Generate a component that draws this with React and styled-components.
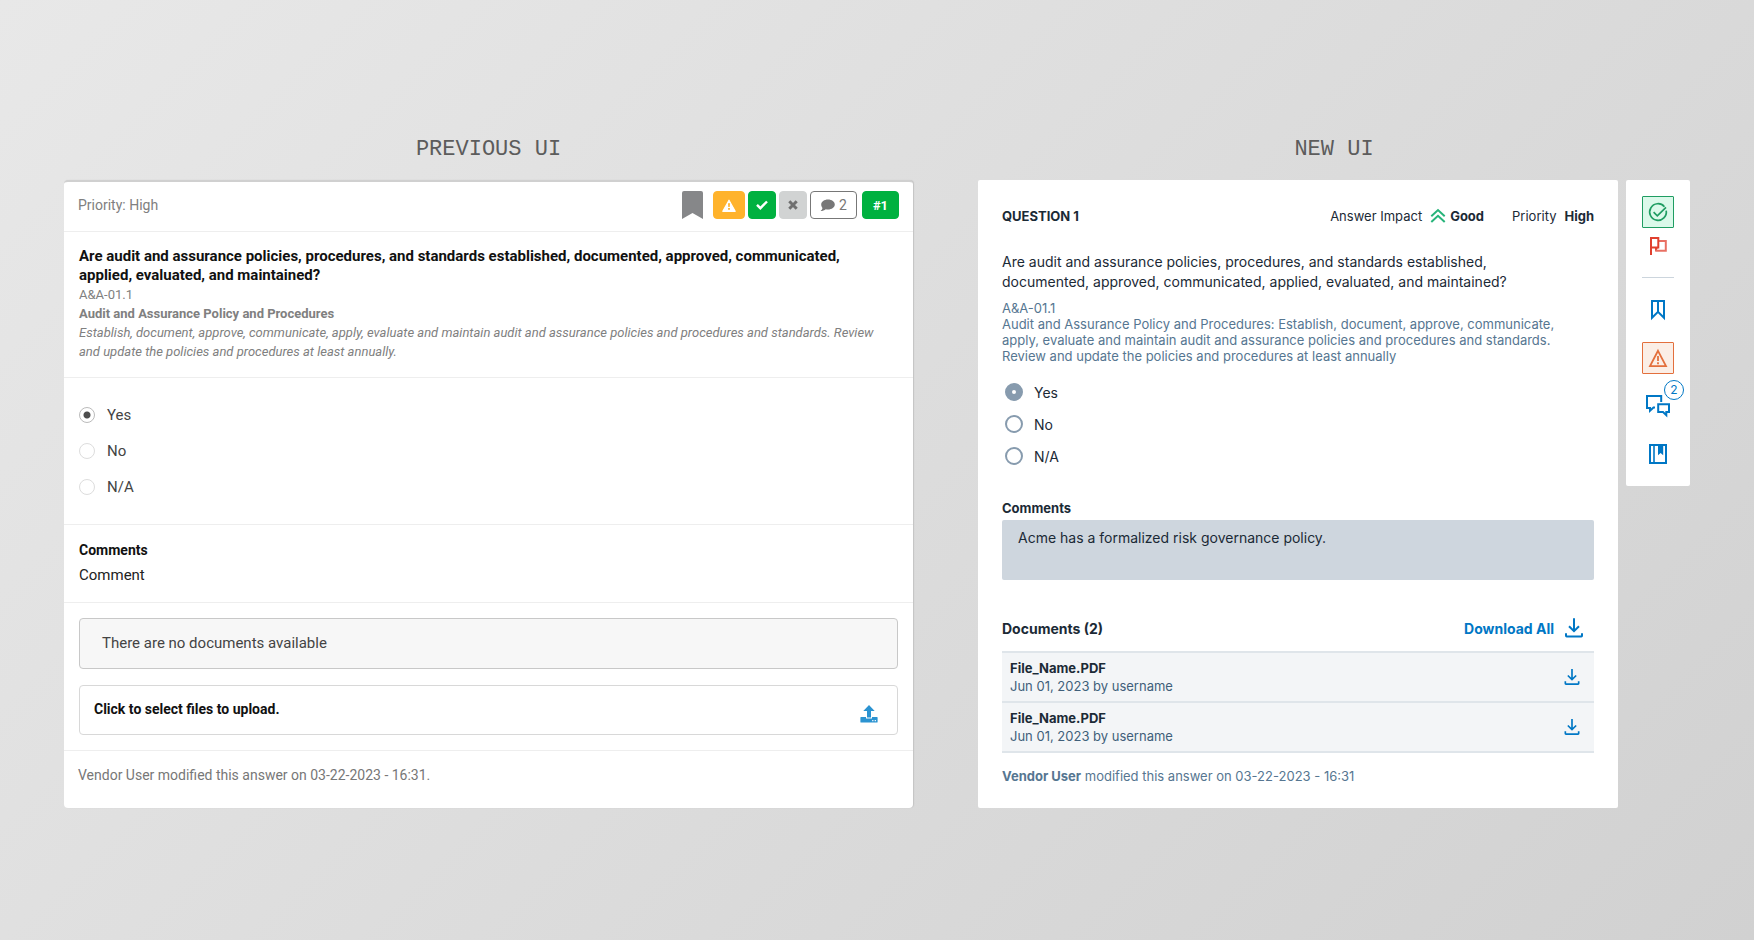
import React, { useState } from 'react';
import styled, { createGlobalStyle } from 'styled-components';

const GlobalStyle = createGlobalStyle`
    * {
        box-sizing: border-box;
    }
    body {
        margin: 0;
    }
    h1, h2, h3, p, ul, fieldset {
        margin: 0;
        padding: 0;
    }
    button {
        font: inherit;
        cursor: pointer;
    }
`

const Page = styled.main`
    min-height: 100vh;
    padding: 138px 64px 64px;
    display: grid;
    grid-template-columns: 849fr 712fr;
    gap: 65px;
    align-items: start;
    background: linear-gradient(135deg, #e8e8e8, #d1d1d1);
`
const Column = styled.section`
    display: flex;
    flex-direction: column;
    gap: 18px;
    min-width: 0;
`
const ColumnTitle = styled.h1`
    font-family: "Liberation Mono", monospace;
    font-size: 22px;
    line-height: 24px;
    font-weight: 400;
    text-align: center;
    color: #5c5c5c;
`

/* ---------- previous card ---------- */

const OldCard = styled.article`
    font-family: Roboto, sans-serif;
    background-color: #fff;
    border-top: 2px solid #d0d0d0;
    border-radius: 4px;
    box-shadow: 1px 0 1px #c4c4c4;
    color: #222;
`
const OldHeader = styled.header`
    display: flex;
    align-items: center;
    justify-content: space-between;
    padding: 9px 14px 12px;
    border-bottom: 1px solid #eee;
    font-size: 14px;
    color: #808080;
`
const Badges = styled.div`
    display: flex;
    align-items: center;
    gap: 3px;
`
const Badge = styled.button`
    display: flex;
    align-items: center;
    justify-content: center;
    gap: 4px;
    height: 28px;
    width: ${props => props.$width}px;
    margin-left: ${props => props.$space || 0}px;
    padding: 0;
    border: 1px solid ${props => props.$line || props.$fill};
    border-radius: 4px;
    background-color: ${props => props.$fill};
    color: ${props => props.$color || '#fff'};
    font-size: ${props => props.$bold ? 13 : 14}px;
    font-weight: ${props => props.$bold ? 700 : 400};
`
const BookmarkToggle = styled.button`
    display: flex;
    padding: 0;
    border: 0;
    background: none;
`
const OldSection = styled.div`
    padding: ${props => props.$pad};
    border-bottom: 1px solid #eee;
`
const OldQuestion = styled.h2`
    font-size: 15px;
    line-height: 19px;
    font-weight: 700;
    color: #111;
`
const OldMeta = styled.p`
    font-size: 13px;
    line-height: 19px;
    color: #808080;
    font-weight: ${props => props.$bold ? 700 : 400};
    font-style: ${props => props.$italic ? 'italic' : 'normal'};
`
const OldOptions = styled.fieldset`
    border: 0;
    display: flex;
    flex-direction: column;
`
const OldOption = styled.label`
    display: flex;
    align-items: center;
    gap: 12px;
    height: 36px;
    font-size: 15px;
    color: #444;
`
const OldRadio = styled.input`
    appearance: none;
    width: 16px;
    height: 16px;
    margin: 0;
    border: 1px solid #ddd;
    border-radius: 50%;
    background-color: #fff;
    &:checked {
        border-color: #bbb;
        background-image: radial-gradient(circle, #4d4d4d 3px, transparent 4px);
    }
`
const OldLabel = styled.h3`
    font-size: 14px;
    line-height: 25px;
    font-weight: 700;
    color: #111;
`
const OldComment = styled.p`
    font-size: 15px;
    line-height: 25px;
`
const OldFiles = styled(OldSection)`
    display: flex;
    flex-direction: column;
    gap: 16px;
`
const EmptyBox = styled.p`
    padding: 12px 22px 13px;
    border: 1px solid #c8c8c8;
    border-radius: 4px;
    background-color: #f7f7f7;
    font-size: 15px;
    line-height: 24px;
    color: #444;
`
const UploadButton = styled.button`
    display: flex;
    align-items: flex-start;
    justify-content: space-between;
    height: 50px;
    padding: 13px 19px 0 14px;
    border: 1px solid #d8d8d8;
    border-radius: 4px;
    background-color: #fff;
    color: #111;
    font-size: 14px;
    line-height: 20px;
    font-weight: 700;

    svg {
        margin-top: 6px;
    }
`
const OldFooter = styled.footer`
    padding: 14px 14px 23px;
    font-size: 14px;
    line-height: 20px;
    color: #777;
`

/* ---------- new card ---------- */

const NewLayout = styled.div`
    display: flex;
    align-items: flex-start;
    gap: 8px;
    font-family: Inter, sans-serif;
    color: #1b2a36;
`
const NewCard = styled.article`
    flex: 1;
    min-width: 0;
    padding: 24px 24px 22px;
    border-radius: 2px;
    background-color: #fff;
`
const NewHeader = styled.header`
    display: flex;
    align-items: center;
    justify-content: space-between;
    height: 24px;
    margin-bottom: 24px;
    font-size: 13px;
`
const QuestionNumber = styled.h3`
    font-size: 13px;
    font-weight: 700;
`
const Facts = styled.div`
    display: flex;
    gap: 28px;
`
const Fact = styled.div`
    display: flex;
    align-items: center;
    gap: 8px;
`
const FactValue = styled.strong`
    display: flex;
    align-items: center;
    gap: 4px;
    font-weight: 700;
`
const NewQuestion = styled.h2`
    max-width: 540px;
    font-size: 14px;
    line-height: 20px;
    font-weight: 400;
`
const NewMeta = styled.p`
    margin-top: 8px;
    font-size: 13px;
    line-height: 16px;
    color: #567691;
`
const NewOptions = styled.fieldset`
    border: 0;
    margin: 12px 0 28px;
`
const NewOption = styled.label`
    display: flex;
    align-items: center;
    gap: 11px;
    height: 32px;
    padding-left: 3px;
    font-size: 14px;
`
const NewRadio = styled.input`
    appearance: none;
    width: 18px;
    height: 18px;
    margin: 0;
    border: 2px solid #879bae;
    border-radius: 50%;
    background-color: #fff;
    &:checked {
        border-width: 7px;
    }
`
const FieldLabel = styled.label`
    display: block;
    margin-bottom: 4px;
    font-size: 13px;
    line-height: 16px;
    font-weight: 700;
`
const CommentBox = styled.textarea`
    display: block;
    width: 100%;
    height: 60px;
    padding: 8px 16px;
    border: 0;
    border-radius: 2px;
    background-color: #ced6de;
    resize: none;
    font-family: inherit;
    font-size: 14px;
    line-height: 20px;
    color: #1b2a36;
`
const DocumentsHeader = styled.div`
    display: flex;
    align-items: center;
    justify-content: space-between;
    height: 32px;
    margin: 32px 0 7px;
    font-size: 14px;
`
const DocumentsTitle = styled.h3`
    font-size: 14px;
    font-weight: 700;
`
const LinkButton = styled.button`
    display: flex;
    align-items: center;
    gap: 8px;
    padding: 0 ${props => props.$right || 0}px 0 0;
    border: 0;
    background: none;
    color: #0077c5;
    font-weight: 700;
`
const FileList = styled.ul`
    list-style: none;
    border-top: 2px solid #dfe5ea;
`
const FileRow = styled.li`
    display: flex;
    align-items: center;
    justify-content: space-between;
    padding: 6px 12px 6px 8px;
    border-bottom: 2px solid #dfe5ea;
    background-color: #f3f5f7;
    font-size: 13px;
    line-height: 18px;
`
const FileName = styled.p`
    font-weight: 700;
`
const FileInfo = styled.p`
    color: #3f5f7a;
`
const NewFooter = styled.footer`
    margin-top: 13px;
    font-size: 13px;
    line-height: 20px;
    color: #567691;
`

/* ---------- side toolbar ---------- */

const Toolbar = styled.nav`
    width: 64px;
    padding: 16px;
    display: flex;
    flex-direction: column;
    gap: 16px;
    border-radius: 2px;
    background-color: #fff;
`
const ToolGroup = styled.div`
    display: flex;
    flex-direction: column;
    gap: 2px;
    padding-bottom: 15px;
    border-bottom: 1px solid #ccd5dd;
`
const Tool = styled.button`
    position: relative;
    display: flex;
    align-items: center;
    justify-content: center;
    width: 32px;
    height: 32px;
    padding: 0;
    border: 1px solid ${props => props.$tint ? props.$color : 'transparent'};
    border-radius: 1px;
    background-color: ${props => props.$tint || 'transparent'};
    color: ${props => props.$color || '#0077c5'};
`
const Count = styled.span`
    position: absolute;
    top: -11px;
    right: -11px;
    width: 20px;
    height: 20px;
    border: 1px solid #0077c5;
    border-radius: 50%;
    background-color: #fff;
    font-size: 12px;
    line-height: 18px;
    text-align: center;
`

const LineIcon = ({ size = 24, width = 2, children }) => (
    <svg width={size} height={size} viewBox="0 0 24 24" fill="none" stroke="currentColor" strokeWidth={width} aria-hidden="true">
        {children}
    </svg>
)

const DownloadIcon = ({ size }) => (
    <LineIcon size={size}>
        <path d="M12 2.3v12.4M7 10.2l5 5 5-5" />
        <path d="M4 17.2v2.6q0 .7.7.7h14.6q.7 0 .7-.7v-2.6" />
    </LineIcon>
)

const answers = ['Yes', 'No', 'N/A'];

const files = [
    { id: 1, name: 'File_Name.PDF', info: 'Jun 01, 2023 by username' },
    { id: 2, name: 'File_Name.PDF', info: 'Jun 01, 2023 by username' },
];

const PreviousCard = () => {
    const [answer, setAnswer] = useState('Yes');
    return (
        <OldCard>
            <OldHeader>
                <span>Priority: High</span>
                <Badges>
                    <BookmarkToggle aria-label="Bookmark">
                        <svg width="21" height="28" viewBox="0 0 21 28" fill="#868789"><path d="M0 2q0-2 2-2h17q2 0 2 2v26L10.5 22 0 28z" /></svg>
                    </BookmarkToggle>
                    <Badge $width={32} $space={7} $fill="#ffb32c" aria-label="Warning">
                        <svg width="14" height="13" viewBox="0 0 14 13">
                            <path d="M7 1.2 13.2 12.3H.8z" fill="#fff" stroke="#fff" strokeWidth="1.2" strokeLinejoin="round" />
                            <path d="M6 4.3h2l-.3 3.8H6.3zM6.1 9h1.8v1.7H6.1z" fill="#ffb32c" />
                        </svg>
                    </Badge>
                    <Badge $width={28} $fill="#00b140" aria-label="Accept">
                        <svg width="12" height="10" viewBox="0 0 12 10" fill="none" stroke="#fff" strokeWidth="2.4"><path d="M1 4.8 4.4 8.2 11 1.5" /></svg>
                    </Badge>
                    <Badge $width={28} $fill="#d1d3d3" $color="#6f6f6f" aria-label="Reject">
                        <svg width="10" height="10" viewBox="0 0 10 10" fill="none" stroke="currentColor" strokeWidth="3"><path d="M1.3 1.3 8.7 8.7M8.7 1.3 1.3 8.7" /></svg>
                    </Badge>
                    <Badge $width={47} $fill="#fff" $line="#777" $color="#777">
                        <svg width="15" height="13" viewBox="0 0 15 13" fill="currentColor"><path d="M8 .5c3.8 0 6.8 2.2 6.8 5S11.8 10.500 8 10.500c-.8 0-1.500-.1-2.200-.3C4.4 11.3 2.6 12 .6 12c1-.8 1.7-1.8 1.9-3C1.7 8 1.2 6.8 1.2 5.5c0-2.8 3-5 6.800-5z" /></svg>
                        2
                    </Badge>
                    <Badge $width={37} $space={2} $fill="#00b140" $bold>#1</Badge>
                </Badges>
            </OldHeader>

            <OldSection $pad="15px 30px 16px 15px">
                <OldQuestion>Are audit and assurance policies, procedures, and standards established, documented, approved, communicated, applied, evaluated, and maintained?</OldQuestion>
                <OldMeta>A&amp;A-01.1</OldMeta>
                <OldMeta $bold>Audit and Assurance Policy and Procedures</OldMeta>
                <OldMeta $italic>Establish, document, approve, communicate, apply, evaluate and maintain audit and assurance policies and procedures and standards. Review and update the policies and procedures at least annually.</OldMeta>
            </OldSection>

            <OldSection $pad="19px 15px">
                <OldOptions>
                    {answers.map(item => (
                        <OldOption key={item}>
                            <OldRadio type="radio" name="previous-answer" checked={answer === item} onChange={() => setAnswer(item)} />
                            {item}
                        </OldOption>
                    ))}
                </OldOptions>
            </OldSection>

            <OldSection $pad="13px 15px 14px">
                <OldLabel>Comments</OldLabel>
                <OldComment>Comment</OldComment>
            </OldSection>

            <OldFiles $pad="15px">
                <EmptyBox>There are no documents available</EmptyBox>
                <UploadButton>
                    Click to select files to upload.
                    <svg width="18" height="18" viewBox="0 0 18 18" fill="#2b93d1">
                        <path d="M9 0 14.7 6H11v6.5H7V6H3.3z" />
                        <path d="M1 12h5v1.5h6V12h5q.6 0 .6.6V17q0 .6-.6.6H1q-.6 0-.6-.6v-4.4q0-.6.6-.6z" />
                        <path d="M12.2 15h1.2v1.2h-1.2zM14.7 15h1.2v1.2h-1.2z" fill="#fff" />
                    </svg>
                </UploadButton>
            </OldFiles>

            <OldFooter>Vendor User modified this answer on 03-22-2023 - 16:31.</OldFooter>
        </OldCard>
    )
}

const NewCardView = () => {
    const [answer, setAnswer] = useState('Yes');
    return (
        <NewCard>
            <NewHeader>
                <QuestionNumber>QUESTION 1</QuestionNumber>
                <Facts>
                    <Fact>
                        Answer Impact
                        <FactValue>
                            <svg width="16" height="16" viewBox="0 0 16 16" fill="none" stroke="#27b47a" strokeWidth="2"><path d="M1.3 8.2 8 2l6.7 6.2M1.3 14 8 7.8l6.7 6.2" /></svg>
                            Good
                        </FactValue>
                    </Fact>
                    <Fact>Priority <FactValue>High</FactValue></Fact>
                </Facts>
            </NewHeader>

            <NewQuestion>Are audit and assurance policies, procedures, and standards established, documented, approved, communicated, applied, evaluated, and maintained?</NewQuestion>
            <NewMeta>
                A&amp;A-01.1<br />
                Audit and Assurance Policy and Procedures: Establish, document, approve, communicate, apply, evaluate and maintain audit and assurance policies and procedures and standards. Review and update the policies and procedures at least annually
            </NewMeta>

            <NewOptions>
                {answers.map(item => (
                    <NewOption key={item}>
                        <NewRadio type="radio" name="new-answer" checked={answer === item} onChange={() => setAnswer(item)} />
                        {item}
                    </NewOption>
                ))}
            </NewOptions>

            <FieldLabel htmlFor="comments">Comments</FieldLabel>
            <CommentBox id="comments" defaultValue="Acme has a formalized risk governance policy." />

            <DocumentsHeader>
                <DocumentsTitle>Documents (2)</DocumentsTitle>
                <LinkButton $right={8}>Download All <DownloadIcon size={24} /></LinkButton>
            </DocumentsHeader>
            <FileList>
                {files.map(file => (
                    <FileRow key={file.id}>
                        <div>
                            <FileName>{file.name}</FileName>
                            <FileInfo>{file.info}</FileInfo>
                        </div>
                        <LinkButton aria-label="Download"><DownloadIcon size={20} /></LinkButton>
                    </FileRow>
                ))}
            </FileList>

            <NewFooter><strong>Vendor User</strong> modified this answer on 03-22-2023 - 16:31</NewFooter>
        </NewCard>
    )
}

const SideTools = () => (
    <Toolbar aria-label="Question tools">
        <ToolGroup>
            <Tool $color="#1f9d62" $tint="#dbf9ea" aria-label="Accept">
                <LineIcon width={1.7}>
                    <path d="M18.4 6.700A8.300 8.300 0 1 0 20.200 10.600" />
                    <path d="M7.6 12.2 11.3 15.800 20 7.300" />
                </LineIcon>
            </Tool>
            <Tool $color="#e0402f" aria-label="Flag">
                <LineIcon>
                    <path d="M12.5 7h7.3v9.8h-9.6v-3" strokeOpacity=".75" />
                    <path d="M5 21V4h7.300v9.600H5" />
                    <path d="M9 13.500h3.300L9.300 17z" fill="currentColor" stroke="none" />
                </LineIcon>
            </Tool>
        </ToolGroup>
        <Tool aria-label="Bookmark">
            <LineIcon><path d="M6 3h12v16.800l-6-6-6 6zM12 3v11" /></LineIcon>
        </Tool>
        <Tool $color="#e36f3c" $tint="#fbeee6" aria-label="Warning">
            <LineIcon width={1.8}><path d="M12 4.800 20 20.200H4zM12 10v5M12 16.300v1.900" /></LineIcon>
        </Tool>
        <Tool aria-label="Comments, 2">
            <LineIcon>
                <path d="M15.2 8V2H1v12h3v2.800L7.500 13.500H9" />
                <path d="M12.2 10.200H23v7.800h-2.700v3.200L17 18h-4.800z" />
            </LineIcon>
            <Count>2</Count>
        </Tool>
        <Tool aria-label="Library">
            <LineIcon>
                <path d="M4 3h16v18H4z" />
                <path d="M8 3v18" strokeWidth="1.6" />
                <path d="M12 3h5.2v10.200l-2.600-2.300L12 13.200z" fill="currentColor" stroke="none" />
            </LineIcon>
        </Tool>
    </Toolbar>
)

const App = () => {
    return (
        <>
            <GlobalStyle />
            <Page>
                <Column>
                    <ColumnTitle>PREVIOUS UI</ColumnTitle>
                    <PreviousCard />
                </Column>
                <Column>
                    <ColumnTitle>NEW UI</ColumnTitle>
                    <NewLayout>
                        <NewCardView />
                        <SideTools />
                    </NewLayout>
                </Column>
            </Page>
        </>
    )
}

export default App;
